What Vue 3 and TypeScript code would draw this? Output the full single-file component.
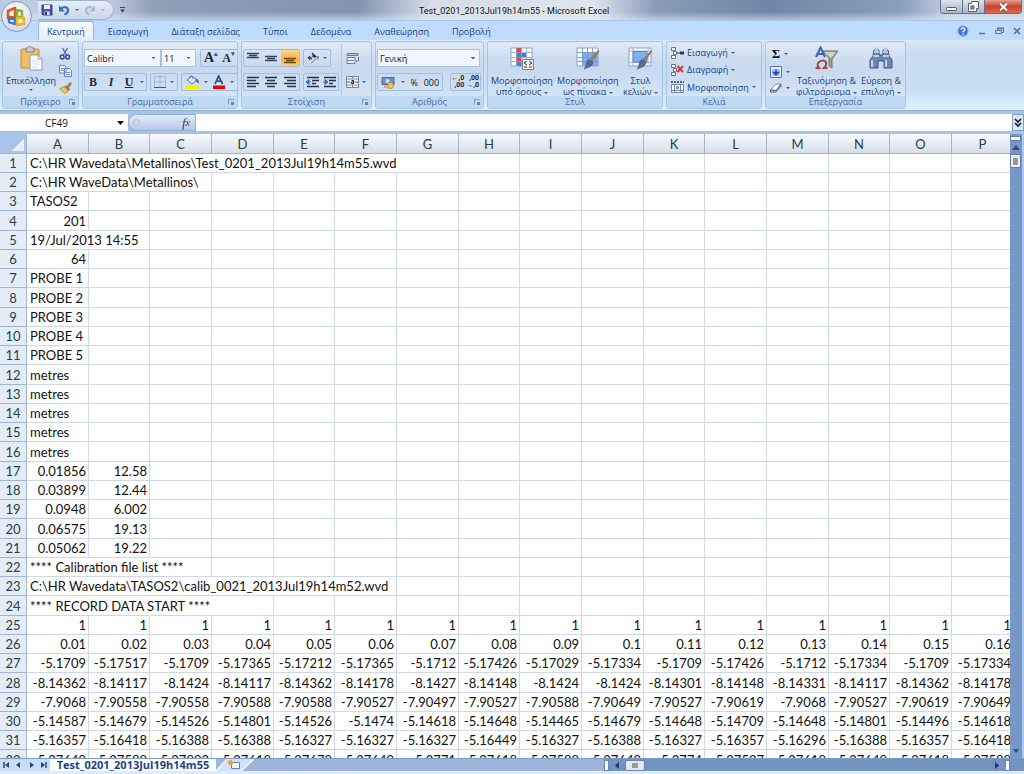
<script setup lang="ts">
import { ref } from 'vue'

interface Cell {
  text: string
  kind: 'text' | 'num'
  span: number
}

const tabs: string[] = ['Κεντρική', 'Εισαγωγή', 'Διάταξη σελίδας', 'Τύποι', 'Δεδομένα', 'Αναθεώρηση', 'Προβολή']
const activeTab = ref(0)
const cellRef = ref('CF49')
const formula = ref('')
const columns: string[] = 'ABCDEFGHIJKLMNOP'.split('')

const label = (text: string, span = 1): Cell[] => [{ text, kind: 'text', span }]
const nums = (values: string): Cell[] =>
  values.split(' ').map((text): Cell => ({ text, kind: 'num', span: 1 }))

const sheet: Cell[][] = [
  label('C:\\HR Wavedata\\Metallinos\\Test_0201_2013Jul19h14m55.wvd', 7),
  label('C:\\HR WaveData\\Metallinos\\', 3),
  label('TASOS2'),
  nums('201'),
  label('19/Jul/2013 14:55', 2),
  nums('64'),
  label('PROBE 1'),
  label('PROBE 2'),
  label('PROBE 3'),
  label('PROBE 4'),
  label('PROBE 5'),
  label('metres'),
  label('metres'),
  label('metres'),
  label('metres'),
  label('metres'),
  nums('0.01856 12.58'),
  nums('0.03899 12.44'),
  nums('0.0948 6.002'),
  nums('0.06575 19.13'),
  nums('0.05062 19.22'),
  label('**** Calibration file list ****', 3),
  label('C:\\HR Wavedata\\TASOS2\\calib_0021_2013Jul19h14m52.wvd', 6),
  label('**** RECORD DATA START ****', 4),
  nums('1 1 1 1 1 1 1 1 1 1 1 1 1 1 1 1'),
  nums('0.01 0.02 0.03 0.04 0.05 0.06 0.07 0.08 0.09 0.1 0.11 0.12 0.13 0.14 0.15 0.16'),
  nums('-5.1709 -5.17517 -5.1709 -5.17365 -5.17212 -5.17365 -5.1712 -5.17426 -5.17029 -5.17334 -5.1709 -5.17426 -5.1712 -5.17334 -5.1709 -5.17334'),
  nums('-8.14362 -8.14117 -8.1424 -8.14117 -8.14362 -8.14178 -8.1427 -8.14148 -8.1424 -8.1424 -8.14301 -8.14148 -8.14331 -8.14117 -8.14362 -8.14178'),
  nums('-7.9068 -7.90558 -7.90558 -7.90588 -7.90588 -7.90527 -7.90497 -7.90527 -7.90588 -7.90649 -7.90527 -7.90619 -7.9068 -7.90527 -7.90619 -7.90649'),
  nums('-5.14587 -5.14679 -5.14526 -5.14801 -5.14526 -5.1474 -5.14618 -5.14648 -5.14465 -5.14679 -5.14648 -5.14709 -5.14648 -5.14801 -5.14496 -5.14618'),
  nums('-5.16357 -5.16418 -5.16388 -5.16388 -5.16327 -5.16327 -5.16327 -5.16449 -5.16327 -5.16388 -5.16327 -5.16357 -5.16296 -5.16388 -5.16357 -5.16418'),
  nums('-5.27649 -5.27588 -5.27893 -5.27618 -5.27679 -5.27649 -5.2771 -5.27618 -5.27588 -5.27649 -5.2774 -5.27527 -5.27618 -5.27649 -5.27618 -5.27588')
]

const used = (row: Cell[]): number => row.reduce((sum, c) => sum + c.span, 0)
const blanks = (row: Cell[]): number => Math.max(0, columns.length - used(row))
</script>

<template>
  <div class="excel">
    <header class="titlebar">
      <div class="quick">
        <button aria-label="Αποθήκευση">
          <svg width="12" height="12" viewBox="0 0 12 12"><path d="M1 1h10v10H2l-1-1z" fill="#4b55b5" stroke="#30389a" /><path d="M3 1h6v4H3z" fill="#eef3ff" /><path d="M3.500 7.500h5V11h-5z" fill="#dfe6f5" /><path d="M4 8h2v3H4z" fill="#3a3f78" /></svg>
        </button>
        <button aria-label="Αναίρεση">
          <svg width="12" height="12" viewBox="0 0 12 12"><path d="M3 4.500C6 2 10 3 10 6.500 10 9 8 10 6.500 10.500" fill="none" stroke="#3c6fc4" stroke-width="2.200" /><path d="M1 1.500v6h6z" fill="#3c6fc4" /></svg>
        </button>
        <i class="caret"></i>
        <button aria-label="Επανάληψη">
          <svg width="12" height="12" viewBox="0 0 12 12"><path d="M9 4.500C6 2 2 3 2 6.500 2 9 4 10 5.500 10.500" fill="none" stroke="#a9bbd2" stroke-width="2.200" /><path d="M11 1.500v6H5z" fill="#a9bbd2" /></svg>
        </button>
        <i class="caret faint"></i>
      </div>
      <button class="customize" aria-label="Προσαρμογή"><svg width="5" height="6" viewBox="0 0 5 6"><path d="M0 .5h5" stroke="#33435c" /><path d="M0 2.500h5L2.500 5.500z" fill="#33435c" /></svg></button>
      <h1>Test_0201_2013Jul19h14m55 - Microsoft Excel</h1>
      <div class="wincontrols">
        <button aria-label="Ελαχιστοποίηση"><svg width="11" height="10" viewBox="0 0 11 10"><rect x=".5" y="5.500" width="10" height="3" rx="1" fill="#fff" stroke="#555d6b" /></svg></button>
        <button aria-label="Επαναφορά"><svg width="11" height="11" viewBox="0 0 11 11"><path d="M3.500.5h7v7h-2v3h-8v-8h3z" fill="#fff" stroke="#555d6b" /><rect x="3" y="5" width="3" height="3" fill="#8996aa" stroke="#555d6b" /></svg></button>
        <button class="close" aria-label="Κλείσιμο"><svg width="11" height="10" viewBox="0 0 11 10"><path d="M2 1.500l7 7M9 1.500l-7 7" stroke="#7b3b35" stroke-width="3.600" /><path d="M2 1.500l7 7M9 1.500l-7 7" stroke="#fff" stroke-width="2.200" /></svg></button>
      </div>
    </header>

    <button class="office" aria-label="Κουμπί του Office">
      <svg width="21" height="21" viewBox="0 0 21 21" fill="none" stroke-width="2.600" stroke-linejoin="round">
        <path d="M2 5l7-3v8l-7 2z" stroke="#e2551c" />
        <path d="M11 4l5 1v6h-5z" stroke="#8fb52f" />
        <path d="M3 13l6-1v6l-6-2z" stroke="#3a78c8" />
        <path d="M11 12h7v6l-7 1z" stroke="#f3b11c" />
      </svg>
    </button>

    <nav class="tabs">
      <button v-for="(t, i) in tabs" :key="t" :class="{ active: i === activeTab }" @click="activeTab = i">{{ t }}</button>
      <div class="doccontrols">
        <button aria-label="Βοήθεια"><svg width="12" height="12" viewBox="0 0 12 12"><circle cx="6" cy="6" r="5.200" fill="#3f78dc" stroke="#8db0e4" /><path d="M4.200 4.700c0-2.500 3.800-2.300 3.600 0C7.700 5.900 6 5.800 6 7.300M6 8.400v1.300" fill="none" stroke="#fff" stroke-width="1.400" /></svg></button>
        <button aria-label="Ελαχιστοποίηση παραθύρου"><svg width="8" height="8" viewBox="0 0 8 8"><path d="M1 6.500h6" stroke="#66778f" stroke-width="1.500" /></svg></button>
        <button aria-label="Επαναφορά παραθύρου"><svg width="9" height="8" viewBox="0 0 9 8"><path d="M2.500 3V1.500h6v4H7M.5 3.500h6v3h-6z" fill="none" stroke="#66778f" /><path d="M2 1.500h7" stroke="#66778f" stroke-width="2" /></svg></button>
        <button aria-label="Κλείσιμο παραθύρου"><svg width="8" height="8" viewBox="0 0 8 8"><path d="M1 1l6 6M7 1L1 7" stroke="#66778f" stroke-width="1.700" /></svg></button>
      </div>
    </nav>

    <section class="ribbon">
      <div class="group clipboard">
        <div class="body">
          <button class="big">
            <svg width="24" height="25" viewBox="0 0 24 25"><rect x="2" y="3" width="18" height="19" rx="1" fill="#f0bd62" stroke="#c08c3a" /><path d="M7 2h2c0-2 4-2 4 0h2v4H7z" fill="#c9ccd4" stroke="#7d808c" /><path d="M11 9h8l4 4v11H11z" fill="#fdfdff" stroke="#8a9cc0" /><path d="M19 9v4h4" fill="none" stroke="#8a9cc0" /><path d="M13 15h8M13 18h8M13 21h6" stroke="#d2dcee" /></svg>
            <span>Επικόλληση</span>
            <i class="caret"></i>
          </button>
          <div class="minis">
            <button aria-label="Αποκοπή"><svg width="12" height="13" viewBox="0 0 12 13"><path d="M3.500 1l4 7M8.500 1l-4 7" stroke="#5670a8" stroke-width="1.400" /><circle cx="3.200" cy="10" r="1.900" fill="none" stroke="#2a52a8" stroke-width="1.500" /><circle cx="8.600" cy="10" r="1.900" fill="none" stroke="#2a52a8" stroke-width="1.500" /></svg></button>
            <button aria-label="Αντιγραφή"><svg width="13" height="12" viewBox="0 0 13 12"><path d="M.5.5h5l1.500 1.500v6H.5zM5.500 3.500h5l2 2v6h-7z" fill="#f2f6ff" stroke="#5f83c8" /><path d="M2 3.500h3M2 5.500h3M7 7.500h4M7 9.500h4" stroke="#6f8fcb" /></svg></button>
            <button aria-label="Πινέλο μορφοποίησης"><svg width="13" height="12" viewBox="0 0 13 12"><path d="M8 4l3-3.500 1.500 1L10 5.500z" fill="#c68b35" stroke="#7c602e" stroke-width=".6" /><path d="M5 4.500l2-1 4 3.500-1 2z" fill="#70798e" /><path d="M.5 7L5 4.500 9.500 9 6 11.500z" fill="#f3c64e" stroke="#a77d26" stroke-width=".7" /></svg></button>
          </div>
        </div>
        <footer>Πρόχειρο<i class="launch"></i></footer>
      </div>

      <div class="group font">
        <div class="body rows">
          <div class="line">
            <div class="joined">
              <select class="fname" aria-label="Γραμματοσειρά"><option>Calibri</option></select>
              <select class="fsize" aria-label="Μέγεθος"><option>11</option></select>
            </div>
            <div class="box">
              <button class="serif grow" aria-label="Αύξηση">A<sup>▴</sup></button>
              <button class="serif shrink" aria-label="Μείωση">A<sup>▾</sup></button>
            </div>
          </div>
          <div class="line">
            <div class="box biu">
              <button class="serif"><b>B</b></button>
              <button class="serif"><em>I</em></button>
              <button class="serif"><u>U</u></button>
              <i class="caret"></i>
            </div>
            <div class="box">
              <button aria-label="Περιγράμματα"><svg width="12" height="12" viewBox="0 0 12 12"><path d="M.5.5h11v11H.5zM6 .5v11M.5 6h11" fill="none" stroke="#7f98c2" stroke-dasharray="1 1" /><path d="M0 11.500h12" stroke="#3d5887" /></svg></button>
              <i class="caret"></i>
            </div>
            <div class="box">
              <button aria-label="Χρώμα γεμίσματος"><svg width="15" height="14" viewBox="0 0 15 14"><path d="M2 5l5-4 5 4-5 4z" fill="#dfe9f8" stroke="#5374a8" /><path d="M5 3c0-3 3-3 3 1" fill="none" stroke="#5374a8" /><path d="M11 4c3 0 3 2 2.500 5-1.500-1-2-3-3.500-4z" fill="#3c6cc0" /><path d="M1 10.500h13V14H1z" fill="#ffee00" /></svg></button>
              <i class="caret"></i>
              <button aria-label="Χρώμα γραμματοσειράς"><svg width="14" height="14" viewBox="0 0 14 14"><path d="M3 9l3.600-8L10.500 9M4.500 6.200h4.600" fill="none" stroke="#31558f" stroke-width="1.800" /><path d="M1 10.500h12V14H1z" fill="#e60000" /></svg></button>
              <i class="caret"></i>
            </div>
          </div>
        </div>
        <footer>Γραμματοσειρά<i class="launch"></i></footer>
      </div>

      <div class="group align">
        <div class="body alignbody">
          <div class="rows">
            <div class="line">
              <div class="box three">
                <button aria-label="Στοίχιση επάνω"><svg width="12" height="12" viewBox="0 0 12 12"><path d="M0 1.500h12M2 3.500h8M0 5.500h12" stroke="#37475f" stroke-width="1.300" /></svg></button>
                <button aria-label="Στοίχιση στη μέση"><svg width="12" height="12" viewBox="0 0 12 12"><path d="M0 4.500h12M2 6.500h8M0 8.500h12" stroke="#37475f" stroke-width="1.300" /></svg></button>
                <button class="on" aria-label="Στοίχιση κάτω"><svg width="12" height="12" viewBox="0 0 12 12"><path d="M0 6.500h12M2 8.500h8M0 10.500h12" stroke="#6b4a12" stroke-width="1.300" /></svg></button>
              </div>
              <div class="box">
                <button aria-label="Προσανατολισμός"><svg width="12" height="12" viewBox="0 0 12 12"><path d="M4 11.500L11 5M11.500 4.500l-.5 3M11.500 4.500l-3 .3" fill="none" stroke="#6d7f9b" /><path d="M1 5l2 3M2 4.500l3 2.500M5 1l4 4M5 4.500c1-1.500 3 0 2 1.500" fill="none" stroke="#222d40" stroke-width="1.300" /></svg></button>
                <i class="caret"></i>
              </div>
            </div>
            <div class="line">
              <div class="box three">
                <button aria-label="Αριστερά"><svg width="12" height="12" viewBox="0 0 12 12"><path d="M0 1.500h12M0 4.500h9M0 7.500h12M0 10.500h9" stroke="#263447" stroke-width="1.700" /></svg></button>
                <button aria-label="Κέντρο"><svg width="12" height="12" viewBox="0 0 12 12"><path d="M0 1.500h12M2 4.500h8M0 7.500h12M2 10.500h8" stroke="#263447" stroke-width="1.700" /></svg></button>
                <button aria-label="Δεξιά"><svg width="12" height="12" viewBox="0 0 12 12"><path d="M0 1.500h12M3 4.500h9M0 7.500h12M3 10.500h9" stroke="#263447" stroke-width="1.700" /></svg></button>
              </div>
              <div class="box two">
                <button aria-label="Μείωση εσοχής"><svg width="13" height="12" viewBox="0 0 13 12"><path d="M1 1.500h12M6 4.500h7M6 7.500h4M1 10.500h12" stroke="#263447" stroke-width="1.500" /><path d="M0 6l3-2.500v5zM3 6h2" fill="#3b6fc4" stroke="#3b6fc4" /></svg></button>
                <button aria-label="Αύξηση εσοχής"><svg width="13" height="12" viewBox="0 0 13 12"><path d="M1 1.500h12M6 4.500h7M6 7.500h4M1 10.500h12" stroke="#263447" stroke-width="1.500" /><path d="M5 6L2 3.500v5zM0 6h2" fill="#3b6fc4" stroke="#3b6fc4" /></svg></button>
              </div>
            </div>
          </div>
          <div class="rows side">
            <div class="line"><button aria-label="Αναδίπλωση κειμένου"><svg width="14" height="13" viewBox="0 0 14 13"><path d="M1 1.500h11M1 5.500h8v6H1zM1 8.500h7" fill="#edf2fa" stroke="#6e7c92" /><path d="M1 1.500h11v2H1z" fill="#b9c3d2" stroke="#6e7c92" /><path d="M12.500 5v4H10" fill="none" stroke="#5b79ab" /></svg></button></div>
            <div class="line"><button aria-label="Συγχώνευση"><svg width="13" height="12" viewBox="0 0 13 12"><path d="M.5.5h12v11H.5zM.5 3h12M.5 9h12M6.500 0v3M6.500 9v3" fill="#fff" stroke="#7186a9" /><path d="M1 6h3.500M12 6H8.500" stroke="#31558f" /><path d="M5.500 4.500h2v3h-2v-1.500h2" fill="none" stroke="#222" /></svg></button><i class="caret"></i></div>
          </div>
        </div>
        <footer>Στοίχιση<i class="launch"></i></footer>
      </div>

      <div class="group number">
        <div class="body rows">
          <div class="line"><select class="numfmt" aria-label="Μορφή αριθμού"><option>Γενική</option></select></div>
          <div class="line spread">
            <div class="box nums">
              <button aria-label="Λογιστική μορφή"><svg width="14" height="14" viewBox="0 0 14 14"><path d="M1 2.500h12v7H1z" fill="#6f8ed6" stroke="#4b67ae" /><circle cx="6.500" cy="6" r="2" fill="#d3def8" /><path d="M7 8.500c0-1.200 5-1.200 5 0v4c0 1.300-5 1.300-5 0z" fill="#f0c552" stroke="#a77d26" stroke-width=".7" /><path d="M3 11c0-1 3-1 3 0v2H3z" fill="#e5ab3c" /></svg></button>
              <i class="caret"></i>
              <button class="sym">%</button>
              <button class="sym">000</button>
            </div>
            <div class="box decs">
              <button class="dec" aria-label="Αύξηση δεκαδικών"><span>←,0</span><span>,00</span></button>
              <button class="dec" aria-label="Μείωση δεκαδικών"><span>,00</span><span>→,0</span></button>
            </div>
          </div>
        </div>
        <footer>Αριθμός<i class="launch"></i></footer>
      </div>

      <div class="group styles">
        <div class="body">
          <button class="big">
            <svg width="24" height="25" viewBox="0 0 24 25"><path d="M1 2h21v18H1z" fill="#fff" stroke="#8ba3cc" /><path d="M6 2h5v5H6zM6 11h5v5H6z" fill="#e8443f" /><path d="M6 7h10v4H6zM6 16h6v4H6z" fill="#4b7fd6" /><path d="M6.500 2v18M11.500 2v18M16.500 2v18M1 6.500h21M1 11.500h21M1 15.500h21" stroke="#8ba3cc" stroke-width=".8" /><path d="M12.500 13.500h11v10h-11z" fill="#f5f5f5" stroke="#777f8d" /><path d="M17 15l-3 2 3 2M14 21h3M19 15l3 2-3 2M19 21h3" fill="none" stroke="#333" /></svg>
            <span>Μορφοποίηση</span><span>υπό όρους <i class="caret"></i></span>
          </button>
          <button class="big">
            <svg width="24" height="25" viewBox="0 0 24 25"><path d="M1 2h21v18H1z" fill="#fff" stroke="#8ba3cc" /><path d="M6 6.500h16V20H6z" fill="#82aef0" /><path d="M6.500 2v18M11.500 2v18M16.500 2v18M1 6.500h21M1 11.500h21M1 15.500h21" stroke="#7893c3" stroke-width=".9" /><path d="M23 5l-7 10-2-1.500L22 5z" fill="#b78a52" stroke="#6e5030" stroke-width=".6" /><path d="M13 13.500l4 3c-1 5-6 5-9 6.500 3-3 1-7 5-9.500z" fill="#4e6c9c" stroke="#3c4f70" stroke-width=".6" /></svg>
            <span>Μορφοποίηση</span><span>ως πίνακα <i class="caret"></i></span>
          </button>
          <button class="big">
            <svg width="24" height="25" viewBox="0 0 24 25"><path d="M1 2h22v18H1z" fill="#fff" stroke="#8ba3cc" /><path d="M5 2v18M20 2v18M1 5h22M1 16.500h22" stroke="#8ba3cc" stroke-width=".8" /><path d="M5 5.500h14V16H5z" fill="#82aef0" stroke="#5f86cc" /><path d="M24 5l-7 10-2-1.500L23 5z" fill="#b78a52" stroke="#6e5030" stroke-width=".6" /><path d="M14 13.500l4 3c-1 5-6 5-9 6.500 3-3 1-7 5-9.500z" fill="#4e6c9c" stroke="#3c4f70" stroke-width=".6" /></svg>
            <span>Στυλ</span><span>κελιών <i class="caret"></i></span>
          </button>
        </div>
        <footer>Στυλ</footer>
      </div>

      <div class="group cells">
        <div class="body stack">
          <button><svg width="13" height="12" viewBox="0 0 13 12"><path d="M.5.5h4v3h-4zM.5 8.500h4v3h-4zM2.500 4.500h3v3h-3z" fill="#fff" stroke="#66748c" /><path d="M6 6h3" stroke="#26364f" /><path d="M9 4.500h4v3H9z" fill="#26364f" /></svg>Εισαγωγή <i class="caret"></i></button>
          <button><svg width="13" height="12" viewBox="0 0 13 12"><path d="M.5.5h4v3h-4zM.5 8.500h4v3h-4zM2.500 4.500h3v3h-3z" fill="#fff" stroke="#66748c" /><path d="M6.500 2l5.500 6M12 2L6.500 8" stroke="#e2362c" stroke-width="1.900" /></svg>Διαγραφή <i class="caret"></i></button>
          <button><svg width="13" height="12" viewBox="0 0 13 12"><path d="M0 1h13" stroke="#26364f" stroke-width="1.500" stroke-dasharray="2 1" /><path d="M.5 3.500h12v8H.5zM3.500 3v9M9.500 3v9M0 9.500h13" fill="#fff" stroke="#76859d" /><path d="M5 5h3v3H5z" fill="#6f9be0" /></svg>Μορφοποίηση <i class="caret"></i></button>
        </div>
        <footer>Κελιά</footer>
      </div>

      <div class="group editing">
        <div class="body">
          <div class="minis">
            <button class="sigma" aria-label="Άθροισμα">Σ <i class="caret"></i></button>
            <button aria-label="Συμπλήρωση"><svg width="12" height="12" viewBox="0 0 12 12"><path d="M.5.5h11v11H.5z" fill="#e6effd" stroke="#5577b8" /><path d="M2 3h8v7H2z" fill="#a9c4f2" /><path d="M6 3v4M3.500 6.500L6 9l2.500-2.500z" fill="#1e4fc0" stroke="#1e4fc0" stroke-width="1.300" /></svg><i class="caret"></i></button>
            <button aria-label="Απαλοιφή"><svg width="12" height="10" viewBox="0 0 12 10"><path d="M.5 7L6 1h5L6 7.500z" fill="#fff" stroke="#7486a3" /><path d="M.5 7v2H6l5-6V1L6 7.500z" fill="#cfd9e8" stroke="#56657f" /></svg><i class="caret"></i></button>
          </div>
          <button class="big">
            <svg width="24" height="25" viewBox="0 0 24 25"><path d="M9 5h15l-6 8v9l-3-2v-8z" fill="#a7a18c" stroke="#77735f" /><path d="M10 6h12l-5 6z" fill="#d6d2c0" /><path d="M2 11L6.500 1.500 11 11M4 8h5.500" fill="none" stroke="#3f62a8" stroke-width="2" /><path d="M1.500 22H5c-6-7 9-11 7-3 0 1-1 2-2 3h3.500" fill="none" stroke="#a3474b" stroke-width="2" /></svg>
            <span>Ταξινόμηση &amp;</span><span>φιλτράρισμα <i class="caret"></i></span>
          </button>
          <button class="big">
            <svg width="24" height="25" viewBox="0 0 24 25"><path d="M5 4h5v5h4V4h5l1 6 3 4v8h-8v-7H9v7H1v-8l3-4z" fill="#6a86b4" stroke="#3c5580" /><path d="M5 6h5M14 6h5M4 10h6M14 10h6" stroke="#dce6f5" stroke-width="1.500" /><path d="M3 14v7M17 14v7" stroke="#c4d4ec" stroke-width="2" /><circle cx="7.500" cy="3.500" r="2" fill="#b9c8df" /><circle cx="16.500" cy="3.500" r="2" fill="#b9c8df" /></svg>
            <span>Εύρεση &amp;</span><span>επιλογή <i class="caret"></i></span>
          </button>
        </div>
        <footer>Επεξεργασία</footer>
      </div>
    </section>

    <div class="formulabar">
      <input v-model="cellRef" class="namebox" aria-label="Πλαίσιο ονόματος" />
      <button class="drop" aria-label="Ονόματα"><svg width="7" height="4" viewBox="0 0 7 4"><path d="M0 0h7L3.500 4z" fill="#111" /></svg></button>
      <div class="fxarea"><i class="knob"></i><button aria-label="Εισαγωγή συνάρτησης">f<small>x</small></button></div>
      <input v-model="formula" class="formula" aria-label="Γραμμή τύπων" />
      <button class="expand" aria-label="Ανάπτυξη"><svg width="8" height="9" viewBox="0 0 8 9"><path d="M1 1l3 3 3-3M1 5l3 3 3-3" fill="none" stroke="#111" stroke-width="1.600" /></svg></button>
    </div>

    <main class="workspace">
      <div class="gridwrap">
        <table>
          <colgroup><col class="rh" /><col v-for="c in columns" :key="c" class="dc" /></colgroup>
          <thead>
            <tr><th class="corner" aria-label="Επιλογή όλων"></th><th v-for="c in columns" :key="c" scope="col">{{ c }}</th></tr>
          </thead>
          <tbody>
            <tr v-for="(row, r) in sheet" :key="r">
              <th scope="row">{{ r + 1 }}</th>
              <td v-for="(cell, c) in row" :key="c" :colspan="cell.span" :class="cell.kind">{{ cell.text }}</td>
              <td v-for="n in blanks(row)" :key="'b' + n"></td>
            </tr>
          </tbody>
        </table>
      </div>
      <div class="vscroll">
        <i class="split"></i>
        <button aria-label="Πάνω"><svg width="8" height="5" viewBox="0 0 8 5"><path d="M0 5h8L4 0z" fill="#2f4c7c" /></svg></button>
        <i class="thumb"></i>
        <button class="end" aria-label="Κάτω"><svg width="6" height="4" viewBox="0 0 6 4"><path d="M0 0h6L3 4z" fill="#2f4c7c" /></svg></button>
      </div>
    </main>

    <div class="bottombar">
      <div class="sheetnav">
        <button aria-label="Πρώτο"><svg width="7" height="6" viewBox="0 0 7 6"><path d="M1 0v6" stroke="#24467e" stroke-width="1.500" /><path d="M6 0v6L2 3z" fill="#24467e" /></svg></button>
        <button aria-label="Προηγούμενο"><svg width="7" height="6" viewBox="0 0 7 6"><path d="M5 0v6L1 3z" fill="#24467e" /></svg></button>
        <button aria-label="Επόμενο"><svg width="7" height="6" viewBox="0 0 7 6"><path d="M2 0v6l4-3z" fill="#24467e" /></svg></button>
        <button aria-label="Τελευταίο"><svg width="7" height="6" viewBox="0 0 7 6"><path d="M6 0v6" stroke="#24467e" stroke-width="1.500" /><path d="M1 0v6l4-3z" fill="#24467e" /></svg></button>
      </div>
      <button class="sheettab">Test_0201_2013Jul19h14m55</button>
      <button class="newsheet" aria-label="Νέο φύλλο">
        <svg width="38" height="12" viewBox="0 0 38 12"><path d="M0 12L11 0h27L25 12z" fill="#d3e3f7" /><path d="M0 12L11 0M38 0L25 12" stroke="#eef6ff" stroke-width="1.500" /><path d="M15.500 3.500h8v6h-8z" fill="#f4f8ff" stroke="#5f7fb8" /><circle cx="14.500" cy="3.500" r="2.500" fill="#e9a23f" /></svg>
      </button>
      <div class="filler"></div>
      <div class="hscroll">
        <i class="hsplit"></i>
        <button aria-label="Αριστερά"><svg width="4" height="7" viewBox="0 0 4 7"><path d="M4 0v7L0 3.500z" fill="#1d3766" /></svg></button>
        <i class="hthumb"></i>
        <button class="end" aria-label="Δεξιά"><svg width="4" height="7" viewBox="0 0 4 7"><path d="M0 0v7l4-3.500z" fill="#1d3766" /></svg></button>
        <i class="hsplit"></i>
      </div>
    </div>
    <div class="status"></div>
  </div>
</template>

<style>
html,
body {
  margin: 0;
  overflow: hidden;
}
</style>

<style scoped>
.excel {
  position: relative;
  display: flex;
  flex-direction: column;
  height: 100vh;
  overflow: hidden;
  background: #bfdbff;
  color: #1e395b;
  font: 9px/11px 'Open Sans', 'Noto Sans', sans-serif;
}
* { box-sizing: border-box; }
button {
  margin: 0;
  padding: 0;
  border: 0;
  background: none;
  color: inherit;
  font: inherit;
  display: flex;
  align-items: center;
  justify-content: center;
}
select, input { font: inherit; color: #111; border: 0; border-radius: 0; outline: 0; margin: 0; }
svg { display: block; flex: none; }
.caret {
  display: inline-block;
  width: 0;
  height: 0;
  border: 2px solid transparent;
  border-top-color: #3f5c8e;
  border-bottom: 0;
  vertical-align: middle;
}

.titlebar {
  height: 20px;
  flex: none;
  display: flex;
  align-items: flex-start;
  padding: 0 2px 0 38px;
  background: linear-gradient(to bottom, transparent 60%, #e8f0fa88 100%), linear-gradient(to right, #b9cbe0 0, #c6d4e4 10%, #8f9fb6 15%, #8194b0 35%, #d3dce7 42%, #dde5ee 58%, #8a9cb6 64%, #7086a8 75%, #8a9fbd 88%, #c5d3e3 93%);
}
.quick {
  display: flex;
  align-items: center;
  gap: 5px;
  width: 76px;
  height: 20px;
  padding-left: 3px;
  border: 1px solid #9fb3cc;
  border-left: 0;
  border-radius: 0 10px 10px 0;
  background: linear-gradient(#e6eef7, #c9d7e8);
}
.faint { opacity: .4; }
.customize { width: 16px; height: 20px; }
h1 {
  flex: 1;
  margin: 0;
  padding: 0 46px 0 4px;
  color: #111;
  font: 9px/22px Roboto, 'Open Sans', sans-serif;
  text-align: center;
  text-shadow: 0 0 5px #fff;
}
.wincontrols { display: flex; border: 1px solid #63728a; border-top: 0; border-radius: 0 0 4px 4px; overflow: hidden; }
.wincontrols button { width: 22px; height: 13px; border-right: 1px solid #63728a; background: linear-gradient(#dde4ec, #a8b5c5); }
.wincontrols .close { width: 36px; border: 0; background: linear-gradient(#e5a092, #c8462f 50%, #d5694a); }

.office {
  position: absolute;
  z-index: 2;
  left: 1px;
  top: 1px;
  width: 31px;
  height: 31px;
  border: 1px solid #8a9ab2;
  border-radius: 50%;
  background: radial-gradient(circle at 50% 35%, #fff, #dbe2ec 65%, #b9c6d8);
}

.tabs { height: 20px; flex: none; display: flex; gap: 1px; padding-left: 38px; color: #15428b; border-top: 1px solid #a9c6ec; }
.tabs > button { height: 20px; padding: 1px 11px 0; border-radius: 3px 3px 0 0; }
.tabs > .active { padding: 0 8px; margin-right: 2px; background: linear-gradient(#f8fbff, #e2edf9); border: 1px solid #96b6df; border-bottom: 0; }
.doccontrols { margin-left: auto; display: flex; align-items: center; gap: 9px; padding-right: 3px; }

.ribbon {
  height: 71px;
  flex: none;
  display: flex;
  gap: 3px;
  padding: 1px 2px;
  color: #15428b;
  background: linear-gradient(#dbe8f7, #cadcf0 20%, #c9def3 70%, #def3ff);
  border-bottom: 1px solid #8fb0d8;
}
.group {
  flex: none;
  display: flex;
  flex-direction: column;
  height: 68px;
  border: 1px solid #a9c5e6;
  border-radius: 3px;
  background: linear-gradient(#dfeaf7, #cfdff1 22%, #c7d9ee 40%, #d8e8f8);
  overflow: hidden;
}
.body { flex: 1; display: flex; min-height: 0; padding: 2px 2px 0; }
.group footer { position: relative; height: 12px; flex: none; background: #c1d8f1; color: #3f6bab; line-height: 12px; text-align: center; }
.launch { position: absolute; right: 3px; top: 3px; width: 6px; height: 6px; border: 1px solid #7f9dc8; border-right-color: #c1d8f1; border-bottom-color: #c1d8f1; }
.launch::after { content: ''; position: absolute; right: -1px; bottom: -1px; width: 3px; height: 3px; background: #6485b8; }
.clipboard { width: 77px; }
.font { width: 156px; }
.align { width: 131px; }
.number { width: 109px; }
.styles { width: 176px; }
.cells { width: 96px; }
.editing { width: 141px; }
.big { flex-direction: column; justify-content: flex-start; padding-top: 2px; white-space: nowrap; }
.big span { line-height: 11px; }
.big svg { margin-bottom: 4px; }
.clipboard .big { width: 52px; }
.clipboard .big .caret { margin-top: 3px; }
.clipboard .minis { padding-right: 3px; }
.minis { display: flex; flex-direction: column; justify-content: space-around; align-items: center; flex: 1; }
.minis button { gap: 4px; }
.rows { display: flex; flex-direction: column; gap: 6px; }
.line { display: flex; gap: 3px; height: 18px; align-items: center; }
.spread { justify-content: space-between; }
.box { display: flex; align-items: center; justify-content: space-around; gap: 4px; height: 18px; padding: 0 3px; border: 1px solid #a3bde0; border-radius: 2px; }
.joined { display: flex; margin-right: 1px; }
select {
  appearance: none;
  height: 18px;
  padding: 0 2px;
  border: 1px solid #abc1de;
  background: linear-gradient(45deg, transparent 50%, #4a6796 50%) right 6px center / 2px 2px no-repeat, linear-gradient(-45deg, transparent 50%, #4a6796 50%) right 4px center / 2px 2px no-repeat, #f2f7fd;
}
.fname { width: 77px; }
.fsize { width: 35px; }
.serif { color: #222b3c; font: bold 12px/14px 'Liberation Serif', serif; }
.grow { font-size: 14px; }
.serif sup { font-size: 7px; color: #2c5bb0; line-height: 7px; align-self: flex-start; }
.biu { width: 65px; padding: 0 2px 0 1px; }
.biu button { width: 14px; }
.three { width: 57px; gap: 0; padding: 0; }
.three button { width: 18px; height: 16px; }
.on { background: linear-gradient(#fbd48a, #f9b23e 60%, #fdd667); }
.two { padding: 0 2px; }
.alignbody { padding: 2px 0 0; }
.alignbody .rows { padding: 5px 2px 0 1px; }
.alignbody .rows + .rows { padding-left: 4px; border-left: 1px solid #b3c9e5; }
.body.rows { padding: 7px 2px 0 1px; }
.numfmt { width: 103px; }
.nums { width: 66px; padding: 0 1px; gap: 2px; }
.sym { color: #222; }
.decs { padding: 0 1px; gap: 2px; }
.dec { flex-direction: column; align-items: flex-end; color: #222; font: bold 7px/7px Roboto, 'Open Sans', sans-serif; }
.styles .body { justify-content: space-between; padding: 2px 4px 0 3px; }
.stack { flex-direction: column; justify-content: space-around; align-items: flex-start; padding-left: 4px; }
.stack button { gap: 3px; }
.sigma { color: #111; font: bold 13px/14px 'Liberation Serif', serif; }
.editing .body { gap: 4px; padding-right: 4px; }

.formulabar {
  height: 23px;
  flex: none;
  display: flex;
  padding: 3px 0;
  background: #a9c3e2;
}
.namebox { width: 113px; height: 17px; font-size: 10px; text-align: center; background: #fff; }
.drop { width: 15px; background: #fff; }
.fxarea { display: flex; align-items: center; justify-content: space-between; width: 68px; padding: 0 5px 0 4px; border: 1px solid #93aed2; border-radius: 9px 0 0 9px; background: linear-gradient(#e0ebf9, #b5cae6); }
.knob { width: 7px; height: 7px; border-radius: 50%; background: #d2d8e0; border: 1px solid #b4c1d3; }
.fxarea button { color: #333d4c; font: italic 13px/14px 'Liberation Serif', serif; }
.fxarea small { font-size: 10px; }
.formula { flex: 1; min-width: 0; background: #fff; }
.expand { width: 12px; border: 1px solid #7d9cc6; background: #d9e7f8; }

.workspace { flex: 1; min-height: 0; display: flex; }
.gridwrap { flex: 1; min-width: 0; overflow: hidden; background: #fff; }
table { width: 1014px; table-layout: fixed; border-collapse: separate; border-spacing: 0; color: #111; font: 13px/18px Lato, 'Open Sans', sans-serif; }
.rh { width: 27px; }
.dc { width: 62px; }
.dc:nth-child(3n) { width: 61px; }
tr { height: 19px; }
tbody tr:nth-child(4n) { height: 20px; }
thead tr { height: 20px; }
th, td { padding: 0; border: 0 solid #d0d7e5; border-width: 0 1px 1px 0; white-space: nowrap; overflow: hidden; }
th { color: #27413e; font-weight: 400; text-align: center; background: #e4ecf7; border-color: #9eb6ce; }
thead th { background: linear-gradient(#f7fafd, #d6dee9); }
thead .corner { background: linear-gradient(135deg, transparent 60%, #e9f2fc 60%) 6px 3px / 18px 14px no-repeat, #a9c4e9; }
.text { padding-left: 3px; }
.num { padding-right: 2px; text-align: right; }

.vscroll { width: 14px; flex: none; display: flex; flex-direction: column; align-items: center; gap: 4px; padding: 2px 1px 0 0; background: #7797c6; border-right: 2px solid #a9c8f2; }
.split { width: 11px; height: 5px; border: 1px solid #5e7fae; background: #fff; }
.thumb { width: 11px; height: 14px; border: 1px solid #667fa8; background: linear-gradient(#999, #999) center / 5px 7px no-repeat, #eef1f6; }
.vscroll .end { margin-top: auto; padding-bottom: 5px; }

.bottombar { height: 13px; flex: none; display: flex; background: #9db7dc; border-top: 1px solid #7c9bc8; }
.sheetnav { display: flex; align-items: center; justify-content: space-around; width: 50px; background: #c9ddf5; }
.sheettab { width: 166px; background: #fff; color: #1c3f86; font: bold 11px/12px 'Open Sans', sans-serif; }
.newsheet { width: 38px; }
.filler { flex: 1; }
.hscroll { display: flex; align-items: center; gap: 6px; width: 41%; padding: 0 14px 0 0; background: #7394c1; }
.hsplit { width: 5px; height: 11px; border: 1px solid #6787b5; background: #fff; }
.hthumb { width: 20px; height: 11px; border: 1px solid #6d83a8; border-radius: 2px; background: linear-gradient(#999, #999) center / 6px 5px no-repeat, #e4e8ef; }
.hscroll .end { margin-left: auto; }
.status { height: 3px; flex: none; background: #dcecfc; }
</style>
